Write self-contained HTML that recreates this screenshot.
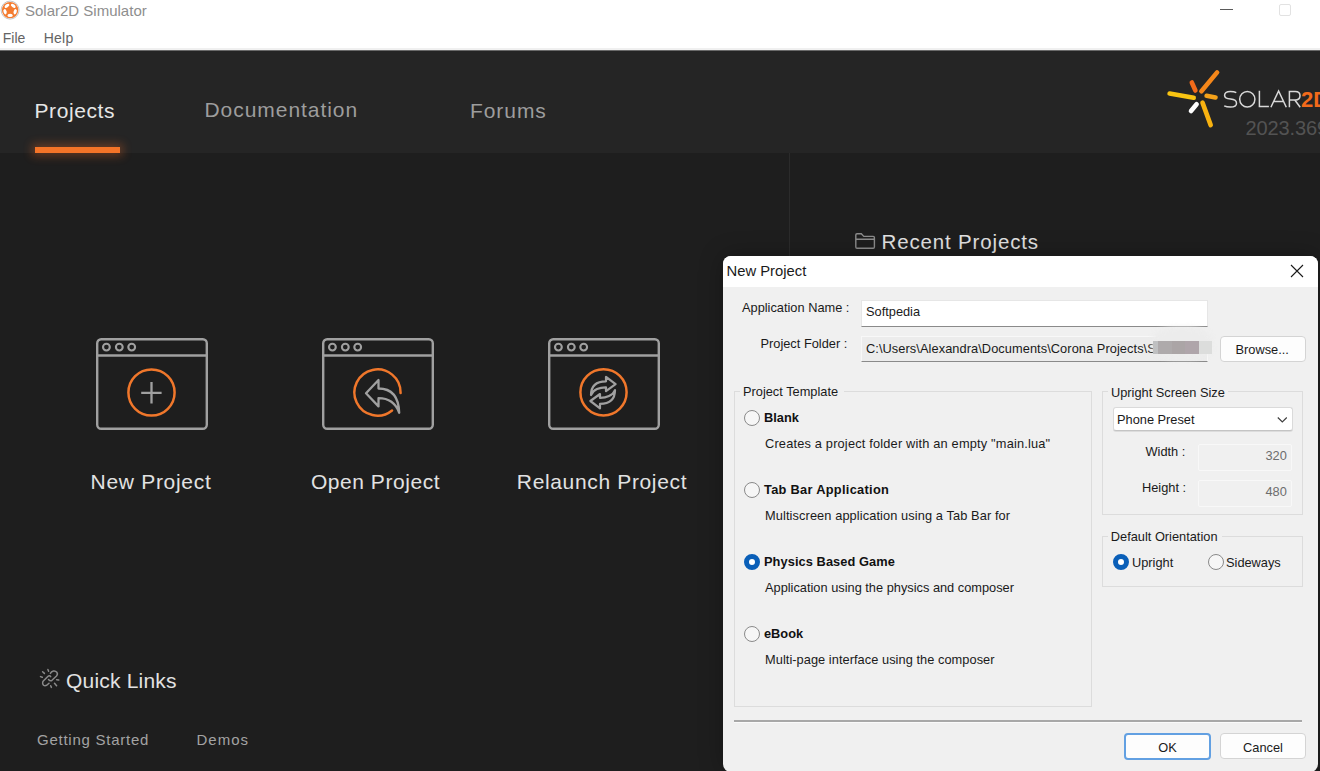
<!DOCTYPE html>
<html><head><meta charset="utf-8"><style>
html,body{margin:0;padding:0;width:1320px;height:771px;overflow:hidden;background:#1e1e1e}
body{position:relative;font-family:"Liberation Sans", sans-serif}
.t{position:absolute;white-space:nowrap;font-family:"Liberation Sans", sans-serif}
.c{text-align:center}
</style></head><body>
<div style="position:absolute;left:0;top:0;width:1320px;height:48px;background:#fff"></div><div style="position:absolute;left:0;top:48px;width:1320px;height:2px;background:#f0f0f0"></div><div style="position:absolute;left:0;top:50px;width:1320px;height:1px;background:#6a6a6a"></div><div class="t" style="left:25px;top:1.60px;font-size:15px;line-height:18.0px;color:#8e8e8e;font-weight:normal;letter-spacing:0px;">Solar2D Simulator</div>
<div class="t" style="left:2.7px;top:29.95px;font-size:14px;line-height:16.8px;color:#646464;font-weight:normal;letter-spacing:0.05px;">File</div>
<div class="t" style="left:43.8px;top:29.95px;font-size:14px;line-height:16.8px;color:#646464;font-weight:normal;letter-spacing:0.2px;">Help</div>
<div style="position:absolute;left:1220px;top:9px;width:13px;height:1px;background:#5a5a5a"></div><div style="position:absolute;left:1279px;top:4px;width:10px;height:10px;border:1px solid #e2e2e2;border-radius:2px"></div><div style="position:absolute;left:0;top:51px;width:1320px;height:102px;background:#252525"></div><div style="position:absolute;left:0;top:153px;width:1320px;height:618px;background:#1e1e1e"></div><div style="position:absolute;left:789px;top:153px;width:1px;height:618px;background:#2b2b2b"></div><div class="t" style="left:34.5px;top:97.62px;font-size:21px;line-height:25.2px;color:#e6e6e6;font-weight:normal;letter-spacing:0.6px;">Projects</div>
<div class="t" style="left:204.5px;top:97.42px;font-size:21px;line-height:25.2px;color:#9d9d9d;font-weight:normal;letter-spacing:0.95px;">Documentation</div>
<div class="t" style="left:470px;top:97.62px;font-size:21px;line-height:25.2px;color:#9d9d9d;font-weight:normal;letter-spacing:0.93px;">Forums</div>
<div style="position:absolute;left:35px;top:147px;width:85px;height:6px;background:#f47428;box-shadow:0 0 10px 3px rgba(244,110,40,0.33)"></div><div class="t c" style="left:51px;width:200px;top:468.62px;font-size:21px;line-height:25px;color:#e2e2e2;letter-spacing:0.7px">New Project</div><div class="t c" style="left:275.5px;width:200px;top:468.62px;font-size:21px;line-height:25px;color:#e2e2e2;letter-spacing:0.55px">Open Project</div><div class="t c" style="left:502px;width:200px;top:468.62px;font-size:21px;line-height:25px;color:#e2e2e2;letter-spacing:0.65px">Relaunch Project</div><div class="t" style="left:881.5px;top:230.10px;font-size:20.5px;line-height:24.6px;color:#e2e2e2;font-weight:normal;letter-spacing:0.85px;">Recent Projects</div>
<div class="t" style="left:66px;top:668.12px;font-size:21px;line-height:25.2px;color:#e2e2e2;font-weight:normal;letter-spacing:0.2px;">Quick Links</div>
<div class="t" style="left:37px;top:731.40px;font-size:15px;line-height:18.0px;color:#a3a3a3;font-weight:normal;letter-spacing:0.75px;">Getting Started</div>
<div class="t" style="left:196.5px;top:731.40px;font-size:15px;line-height:18.0px;color:#a3a3a3;font-weight:normal;letter-spacing:1.0px;">Demos</div>
<div class="t" style="left:1245.5px;top:115.67px;font-size:20px;line-height:24.0px;color:#535353;font-weight:normal;letter-spacing:-0.1px;">2023.369</div>

<svg style="position:absolute;left:0;top:0" width="1320" height="771" viewBox="0 0 1320 771">
<circle cx="10.1" cy="10.1" r="9" fill="none" stroke="#c4c4c4" stroke-width="1"/>
<circle cx="10.1" cy="10.1" r="8.2" fill="#f47b2f"/>
<ellipse cx="10.10" cy="15.40" rx="2.7" ry="1.55" fill="#fff" transform="rotate(180 10.10 15.40)"/>
<ellipse cx="5.06" cy="11.74" rx="2.7" ry="1.55" fill="#fff" transform="rotate(252 5.06 11.74)"/>
<ellipse cx="6.98" cy="5.81" rx="2.7" ry="1.55" fill="#fff" transform="rotate(324 6.98 5.81)"/>
<ellipse cx="13.22" cy="5.81" rx="2.7" ry="1.55" fill="#fff" transform="rotate(396 13.22 5.81)"/>
<ellipse cx="15.14" cy="11.74" rx="2.7" ry="1.55" fill="#fff" transform="rotate(108 15.14 11.74)"/>
<line x1="1169.6" y1="93.6" x2="1193.7" y2="97.8" stroke="#f9c412" stroke-width="4.6" stroke-linecap="round"/>
<line x1="1191.8" y1="82.5" x2="1195.4" y2="90.5" stroke="#f26a1a" stroke-width="4.6" stroke-linecap="round"/>
<line x1="1217.1" y1="72.4" x2="1201.4" y2="91.3" stroke="#f5871a" stroke-width="4.6" stroke-linecap="round"/>
<line x1="1206.6" y1="95.8" x2="1215.5" y2="97.4" stroke="#f5a21a" stroke-width="4.6" stroke-linecap="round"/>
<line x1="1191" y1="111" x2="1196.6" y2="104.2" stroke="#ffffff" stroke-width="4.6" stroke-linecap="round"/>
<line x1="1202.5" y1="102.6" x2="1210.7" y2="125.1" stroke="#f8b210" stroke-width="4.6" stroke-linecap="round"/>
<g fill="none" stroke="#d9d9d9" stroke-width="1.5" stroke-linecap="butt" stroke-linejoin="miter">
<path d="M1236.3,92.6 C1234.5,91.6 1232.5,91.4 1230.4,91.4 C1226.5,91.4 1224.6,92.9 1224.6,95.4 C1224.6,98.2 1227.2,98.7 1230.6,99.1 C1234.3,99.5 1236.5,100.3 1236.5,103.2 C1236.5,106 1234.3,107.1 1230.4,107.1 C1228.2,107.1 1226,106.8 1224.2,105.9"/>
<ellipse cx="1247.3" cy="99.2" rx="7.6" ry="7.8"/>
<path d="M1259.4,90.8 V106.6 H1268.9"/>
<path d="M1270.9,107.3 L1278.6,91 L1286.3,107.3 M1273.6,101.6 H1283.6"/>
<path d="M1289.4,107.3 V91.6 H1295.2 C1298.4,91.6 1300,93.2 1300,95.8 C1300,98.4 1298.4,100 1295.2,100 H1289.4 M1294.8,100 L1300.2,107.3"/>
</g>
<text x="1301" y="107.4" font-family="Liberation Sans" font-weight="bold" font-size="22" fill="#f26a1b">2D</text>
<g transform="translate(96,338)">
<rect x="1.2" y="1.3" width="109.6" height="89.5" rx="4" fill="none" stroke="#a0a0a0" stroke-width="2.4"/>
<line x1="1" y1="17.6" x2="111" y2="17.6" stroke="#a0a0a0" stroke-width="2.5"/>
<circle cx="10.4" cy="9.1" r="3.4" fill="none" stroke="#a0a0a0" stroke-width="2.1"/>
<circle cx="23.3" cy="9.1" r="3.4" fill="none" stroke="#a0a0a0" stroke-width="2.1"/>
<circle cx="35.7" cy="9.1" r="3.4" fill="none" stroke="#a0a0a0" stroke-width="2.1"/>
</g>
<g transform="translate(322,338)">
<rect x="1.2" y="1.3" width="109.6" height="89.5" rx="4" fill="none" stroke="#a0a0a0" stroke-width="2.4"/>
<line x1="1" y1="17.6" x2="111" y2="17.6" stroke="#a0a0a0" stroke-width="2.5"/>
<circle cx="10.4" cy="9.1" r="3.4" fill="none" stroke="#a0a0a0" stroke-width="2.1"/>
<circle cx="23.3" cy="9.1" r="3.4" fill="none" stroke="#a0a0a0" stroke-width="2.1"/>
<circle cx="35.7" cy="9.1" r="3.4" fill="none" stroke="#a0a0a0" stroke-width="2.1"/>
</g>
<g transform="translate(548,338)">
<rect x="1.2" y="1.3" width="109.6" height="89.5" rx="4" fill="none" stroke="#a0a0a0" stroke-width="2.4"/>
<line x1="1" y1="17.6" x2="111" y2="17.6" stroke="#a0a0a0" stroke-width="2.5"/>
<circle cx="10.4" cy="9.1" r="3.4" fill="none" stroke="#a0a0a0" stroke-width="2.1"/>
<circle cx="23.3" cy="9.1" r="3.4" fill="none" stroke="#a0a0a0" stroke-width="2.1"/>
<circle cx="35.7" cy="9.1" r="3.4" fill="none" stroke="#a0a0a0" stroke-width="2.1"/>
</g>
<circle cx="151.5" cy="392.5" r="23.1" fill="none" stroke="#f0772b" stroke-width="2.5"/>
<path d="M141.2,392.8 H161.6 M151.5,382 V403.5" stroke="#a0a0a0" stroke-width="2.3" fill="none"/>
<path d="M392.04,410.45 A23.1,23.1 0 1 1 400.60,392.90" fill="none" stroke="#f0772b" stroke-width="2.5" stroke-linecap="round"/>
<path d="M366,393.2 L378.5,380 V388.5 C388,388.5 398.5,393 399.2,412.8 C396,404 390,398.2 378.5,398.2 V406.4 Z" fill="none" stroke="#a0a0a0" stroke-width="2.3" stroke-linejoin="round"/>
<circle cx="603.5" cy="392.3" r="23.1" fill="none" stroke="#f0772b" stroke-width="2.5"/>
<g transform="translate(603,392.6)" fill="none" stroke="#a0a0a0" stroke-width="2.2" stroke-linejoin="round"><path d="M12.6,-8.4 L3,-15.7 V-11.3 C-5,-11.3 -12,-8 -12,2.5 C-10,-3 -3,-5.4 3,-5.3 V-1.4 Z"/><path d="M12.6,-8.4 L3,-15.7 V-11.3 C-5,-11.3 -12,-8 -12,2.5 C-10,-3 -3,-5.4 3,-5.3 V-1.4 Z" transform="rotate(180)"/></g>
<path d="M855.8,247 V235 Q855.8,233.8 857,233.8 H861.3 L863.8,236.4 H873.2 Q874.4,236.4 874.4,237.6 V247 Q874.4,248.2 873.2,248.2 H857 Q855.8,248.2 855.8,247 Z M855.8,239.3 H874.4" fill="none" stroke="#8c8c8c" stroke-width="1.4"/>
<g fill="none" stroke="#8a8a8a" stroke-width="1.5" stroke-linecap="round">
<path d="M50.4,673.4 C51.5,671 55,670 56.8,672.3 C57.8,673.6 57.4,675 56.5,676 L52,680.3 C50.8,681.2 49.5,680.6 48.5,679.5"/>
<path d="M50.7,676.6 C50,675.6 48.8,675.6 47.8,676.5 L43.3,681 C42.2,682.2 42.5,684.6 43.8,685.4 C45.2,686.2 46.8,685.6 49,683.2"/>
<line x1="47.9" y1="669.5" x2="48.6" y2="671.3"/>
<line x1="42.6" y1="671.7" x2="44.4" y2="673.4"/>
<line x1="40.5" y1="676.6" x2="42.3" y2="677.3"/>
<line x1="56.6" y1="679.7" x2="58.75" y2="680.1"/>
<line x1="54.5" y1="683.2" x2="56.6" y2="685.7"/>
<line x1="50.7" y1="685.7" x2="51.4" y2="687.4"/>
</g>
</svg>
<div style="position:absolute;left:723px;top:256px;width:595px;height:516px;background:#f0f0f0;border-radius:8px;overflow:hidden;box-shadow:0 0 24px rgba(0,0,0,0.28)">
<div style="position:absolute;left:0px;top:0px;width:595px;height:31px;background:#fff"></div>
<div class="t" style="left:3.5px;top:6.79px;font-size:14.8px;line-height:17.76px;color:#1a1a1a;font-weight:normal;letter-spacing:0px;">New Project</div>
<svg style="position:absolute;left:567px;top:8px" width="14" height="14" viewBox="0 0 14 14"><path d="M1,1 L13,13 M13,1 L1,13" stroke="#1a1a1a" stroke-width="1.1"/></svg><div class="t" style="left:19px;top:43.68px;font-size:12.8px;line-height:15.36px;color:#1a1a1a;font-weight:normal;letter-spacing:0px;">Application Name :</div>
<div class="t" style="left:37.5px;top:79.88px;font-size:12.8px;line-height:15.36px;color:#1a1a1a;font-weight:normal;letter-spacing:0px;">Project Folder :</div>
<div style="position:absolute;left:138px;top:44px;width:347px;height:27px;background:#fff;box-sizing:border-box;border:1px solid #e6e6e6;border-bottom:1px solid #8a8a8a"></div>
<div class="t" style="left:143px;top:48.38px;font-size:12.8px;line-height:15.36px;color:#1a1a1a;font-weight:normal;letter-spacing:0px;">Softpedia</div>
<div style="position:absolute;left:138px;top:80px;width:347px;height:26px;background:#ececec;box-sizing:border-box;border:1px solid #f8f8f8;border-bottom:1px solid #8a8a8a"></div>
<div class="t" style="left:143px;top:84.68px;font-size:12.8px;line-height:15.36px;color:#1a1a1a;font-weight:normal;letter-spacing:0.07px;">C:\Users\Alexandra\Documents\Corona Projects\S</div>
<div style="position:absolute;left:429px;top:71px;width:60px;height:32px;background:#ececec;filter:blur(2.5px);border-radius:40%"></div>
<div style="position:absolute;left:430px;top:85px;width:5px;height:13px;background:#bfc0c1"></div>
<div style="position:absolute;left:435px;top:85px;width:14px;height:13px;background:#aeaaab"></div>
<div style="position:absolute;left:449px;top:85px;width:13px;height:13px;background:#aba5a6"></div>
<div style="position:absolute;left:462px;top:85px;width:14px;height:13px;background:#afa5aa"></div>
<div style="position:absolute;left:476px;top:85px;width:13px;height:13px;background:#dcdddc"></div>
<div style="position:absolute;left:497px;top:80px;width:86px;height:26px;background:#fdfdfd;box-sizing:border-box;border:1px solid #d4d4d4;border-radius:4px"></div>
<div class="t" style="left:512.5px;top:85.58px;font-size:12.8px;line-height:15.36px;color:#1a1a1a;font-weight:normal;letter-spacing:0px;">Browse...</div>
<div style="position:absolute;left:11px;top:135px;width:358px;height:316px;box-sizing:border-box;border:1px solid #dcdcdc"></div>
<div style="position:absolute;left:17px;top:124px;width:104px;height:16px;background:#f0f0f0"></div>
<div class="t" style="left:20px;top:128.08px;font-size:12.8px;line-height:15.36px;color:#1a1a1a;font-weight:normal;letter-spacing:0px;">Project Template</div>
<div style="position:absolute;left:21px;top:153.5px;width:16px;height:16px;box-sizing:border-box;border-radius:50%;background:#f6f6f6;border:1px solid #8a8a8a"></div>
<div class="t" style="left:41px;top:154.08px;font-size:12.8px;line-height:15.36px;color:#111;font-weight:bold;letter-spacing:0px;">Blank</div>
<div class="t" style="left:42px;top:180.48px;font-size:12.8px;line-height:15.36px;color:#1a1a1a;font-weight:normal;letter-spacing:0.18px;">Creates a project folder with an empty "main.lua"</div>
<div style="position:absolute;left:21px;top:225.5px;width:16px;height:16px;box-sizing:border-box;border-radius:50%;background:#f6f6f6;border:1px solid #8a8a8a"></div>
<div class="t" style="left:41px;top:226.08px;font-size:12.8px;line-height:15.36px;color:#111;font-weight:bold;letter-spacing:0.3px;">Tab Bar Application</div>
<div class="t" style="left:42px;top:252.48px;font-size:12.8px;line-height:15.36px;color:#1a1a1a;font-weight:normal;letter-spacing:0.1px;">Multiscreen application using a Tab Bar for</div>
<div style="position:absolute;left:21px;top:297.5px;width:16px;height:16px;box-sizing:border-box;border-radius:50%;background:#fff;border:5px solid #0a5fb8"></div>
<div class="t" style="left:41px;top:298.08px;font-size:12.8px;line-height:15.36px;color:#111;font-weight:bold;letter-spacing:0.08px;">Physics Based Game</div>
<div class="t" style="left:42px;top:324.48px;font-size:12.8px;line-height:15.36px;color:#1a1a1a;font-weight:normal;letter-spacing:0px;">Application using the physics and composer</div>
<div style="position:absolute;left:21px;top:369.5px;width:16px;height:16px;box-sizing:border-box;border-radius:50%;background:#f6f6f6;border:1px solid #8a8a8a"></div>
<div class="t" style="left:41px;top:370.08px;font-size:12.8px;line-height:15.36px;color:#111;font-weight:bold;letter-spacing:0px;">eBook</div>
<div class="t" style="left:42px;top:396.48px;font-size:12.8px;line-height:15.36px;color:#1a1a1a;font-weight:normal;letter-spacing:0.05px;">Multi-page interface using the composer</div>
<div style="position:absolute;left:379px;top:135px;width:201px;height:124px;box-sizing:border-box;border:1px solid #dcdcdc"></div>
<div style="position:absolute;left:385px;top:124px;width:120px;height:16px;background:#f0f0f0"></div>
<div class="t" style="left:388px;top:128.58px;font-size:12.8px;line-height:15.36px;color:#1a1a1a;font-weight:normal;letter-spacing:0px;">Upright Screen Size</div>
<div style="position:absolute;left:390px;top:151px;width:180px;height:24px;background:#fff;box-sizing:border-box;border:1px solid #dadada;border-bottom-color:#c4c4c4;border-radius:3px;box-shadow:0 1px 0 #dcdcdc"></div>
<div class="t" style="left:394px;top:156.38px;font-size:12.8px;line-height:15.36px;color:#1a1a1a;font-weight:normal;letter-spacing:0px;">Phone Preset</div>
<svg style="position:absolute;left:554px;top:160px" width="11" height="8" viewBox="0 0 11 8"><path d="M0.8,1.5 L5.3,6 L9.8,1.5" fill="none" stroke="#404040" stroke-width="1.2"/></svg><div class="t" style="left:422.5px;top:188.08px;font-size:12.8px;line-height:15.36px;color:#1a1a1a;font-weight:normal;letter-spacing:0px;">Width :</div>
<div style="position:absolute;left:475px;top:188px;width:94px;height:27px;background:#f0f0f0;box-sizing:border-box;border:1px solid #f8f8f8;border-radius:2px"></div>
<div class="t" style="left:483.80px;width:80px;text-align:right;top:191.96px;font-size:12.8px;line-height:15px;color:#6d6d6d">320</div><div class="t" style="left:419px;top:224.38px;font-size:12.8px;line-height:15.36px;color:#1a1a1a;font-weight:normal;letter-spacing:0px;">Height :</div>
<div style="position:absolute;left:475px;top:224px;width:94px;height:27px;background:#f0f0f0;box-sizing:border-box;border:1px solid #f8f8f8;border-radius:2px"></div>
<div class="t" style="left:483.80px;width:80px;text-align:right;top:227.66px;font-size:12.8px;line-height:15px;color:#6d6d6d">480</div><div style="position:absolute;left:379px;top:280px;width:201px;height:51px;box-sizing:border-box;border:1px solid #dcdcdc"></div>
<div style="position:absolute;left:385px;top:272px;width:114px;height:14px;background:#f0f0f0"></div>
<div class="t" style="left:387.79999999999995px;top:272.68px;font-size:12.8px;line-height:15.36px;color:#1a1a1a;font-weight:normal;letter-spacing:0px;">Default Orientation</div>
<div style="position:absolute;left:390px;top:297.70000000000005px;width:16px;height:16px;box-sizing:border-box;border-radius:50%;background:#fff;border:5px solid #0a5fb8"></div>
<div class="t" style="left:409px;top:298.58px;font-size:12.8px;line-height:15.36px;color:#1a1a1a;font-weight:normal;letter-spacing:0px;">Upright</div>
<div style="position:absolute;left:484.5px;top:297.70000000000005px;width:16px;height:16px;box-sizing:border-box;border-radius:50%;background:#f6f6f6;border:1px solid #8a8a8a"></div>
<div class="t" style="left:503px;top:298.58px;font-size:12.8px;line-height:15.36px;color:#1a1a1a;font-weight:normal;letter-spacing:0px;">Sideways</div>
<div style="position:absolute;left:11px;top:464px;width:568px;height:2px;background:#a8a8a8"></div>
<div style="position:absolute;left:11px;top:466px;width:568px;height:1px;background:#fafafa"></div>
<div style="position:absolute;left:401px;top:477px;width:87px;height:27px;background:#fdfdfd;box-sizing:border-box;border:2px solid #62a0e2;border-radius:4px"></div>
<div class="t c" style="left:401px;width:87px;top:483.56px;font-size:12.8px;line-height:15px;color:#1a1a1a">OK</div><div style="position:absolute;left:497px;top:477px;width:86px;height:26px;background:#fdfdfd;box-sizing:border-box;border:1px solid #d4d4d4;border-radius:4px"></div>
<div class="t c" style="left:497px;width:86px;top:483.56px;font-size:12.8px;line-height:15px;color:#1a1a1a">Cancel</div></div>
</body></html>
